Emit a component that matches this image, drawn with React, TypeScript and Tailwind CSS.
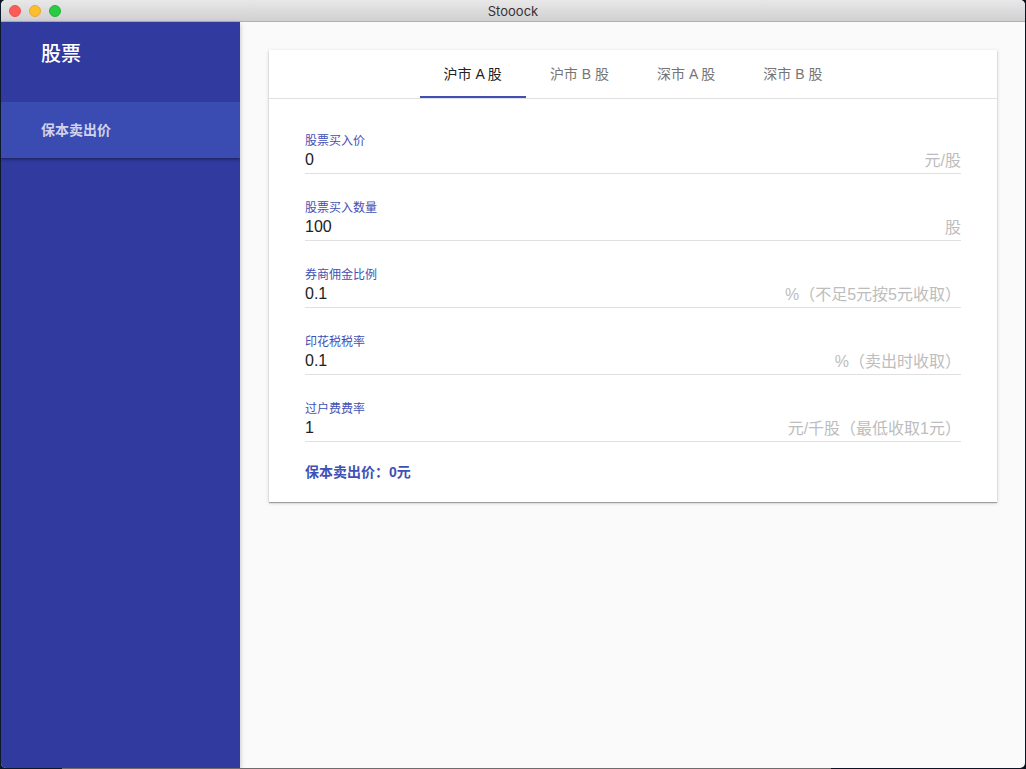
import React, { useState } from "react";
import clsx from "clsx";

const markets = ["沪市 A 股", "沪市 B 股", "深市 A 股", "深市 B 股"];

const fields = [
  { name: "price", label: "股票买入价", unit: "元/股" },
  { name: "amount", label: "股票买入数量", unit: "股" },
  { name: "commission", label: "券商佣金比例", unit: "%（不足5元按5元收取）" },
  { name: "stampTax", label: "印花税税率", unit: "%（卖出时收取）" },
  { name: "transferFee", label: "过户费费率", unit: "元/千股（最低收取1元）" },
];

const defaults: Record<string, string> = {
  price: "0",
  amount: "100",
  commission: "0.1",
  stampTax: "0.1",
  transferFee: "1",
};

function getBreakEven(values: Record<string, string>) {
  const [price, amount, commission, stampTax, transferFee] = fields.map(
    (field) => Number(values[field.name]) || 0
  );
  if (!price || !amount) return 0;

  const transfer = Math.max(1, (amount / 1000) * transferFee);
  const buyFee = Math.max(5, (price * amount * commission) / 100);
  const cost = price * amount + buyFee + transfer * 2;

  // the minimum commission of 5 applies when selling too
  let total = (cost + 5) / (1 - stampTax / 100);
  if ((total * commission) / 100 > 5) {
    total = cost / (1 - stampTax / 100 - commission / 100);
  }
  return Math.ceil((total / amount) * 1000) / 1000;
}

function TitleBar() {
  return (
    <header className="grid h-[22px] grid-cols-3 items-center border-b border-[#b1afb1] bg-linear-to-b from-[#e9e8e9] to-[#d1cfd1] px-2">
      <div className="flex gap-2">
        <button
          aria-label="close"
          className="size-3 rounded-full border border-[#e9544b] bg-[#fc5b57]"
        />
        <button
          aria-label="minimize"
          className="size-3 rounded-full border border-[#e5a935] bg-[#fdbe2e]"
        />
        <button
          aria-label="zoom"
          className="size-3 rounded-full border border-[#24b339] bg-[#28cb41]"
        />
      </div>
      <h1 className="text-center font-[Inter,sans-serif] text-[13px] leading-5 text-[#343234]">
        Stooock
      </h1>
    </header>
  );
}

function Sidebar() {
  return (
    <aside className="relative z-10 w-[239px] shrink-0 bg-[#303a9f] shadow-[0_2px_5px_rgba(0,0,0,0.26)]">
      <h2 className="h-20 px-10 pt-4 text-xl leading-8 font-medium text-white">
        股票
      </h2>
      <nav className="overflow-hidden pb-2">
        <a
          href="#break-even"
          className="flex h-14 items-center bg-[#3a4bb2] px-10 text-sm font-bold text-[#cfd2ea] shadow-[0_1px_3px_rgba(0,0,0,0.5)]"
        >
          保本卖出价
        </a>
      </nav>
    </aside>
  );
}

function Tabs({
  active,
  onChange,
}: {
  active: number;
  onChange: (index: number) => void;
}) {
  return (
    <div
      role="tablist"
      className="flex justify-center border-b border-[#e0e0e0]"
    >
      {markets.map((market, index) => (
        <button
          key={market}
          role="tab"
          aria-selected={active === index}
          onClick={() => onChange(index)}
          className={clsx(
            "h-12 border-b-2 px-6 pt-0.5 text-sm",
            active === index
              ? "border-[#3f51b5] text-[#212121]"
              : "border-transparent text-[#757575]"
          )}
        >
          {market}
        </button>
      ))}
    </div>
  );
}

function App() {
  const [active, setActive] = useState(0);
  const [values, setValues] = useState(defaults);

  return (
    <div
      lang="zh-CN"
      className="flex min-h-screen flex-col bg-linear-[90deg,#0b1a2a_6%,#6f6c6e_6%,#6f6c6e_81%,#0a1424_81%] px-px pb-px font-['Liberation_Sans','Noto_Sans_CJK_SC',sans-serif]"
    >
      <div className="flex grow flex-col overflow-hidden rounded-[5px] bg-[#fafafa]">
        <TitleBar />
        <div className="flex grow">
          <Sidebar />
          <main className="grow py-7 pr-7 pl-[29px]">
            <section className="bg-white shadow-[0_1px_4px_rgba(0,0,0,0.16),0_1px_1px_rgba(0,0,0,0.3)]">
              <Tabs active={active} onChange={setActive} />
              <form className="px-9 pt-2 pb-5">
                {fields.map(({ name, label, unit }) => (
                  <div key={name} className="border-b border-[#e0e0e0] pt-[26px]">
                    <label
                      htmlFor={name}
                      className="block text-xs leading-4 text-[#3f51b5]"
                    >
                      {label}
                    </label>
                    <div className="flex h-6 items-center">
                      <input
                        id={name}
                        value={values[name]}
                        onChange={(e) =>
                          setValues({ ...values, [name]: e.target.value })
                        }
                        className="min-w-0 grow pb-0.5 text-base leading-5 text-[#212121] outline-none"
                      />
                      <span className="text-base leading-5 text-[#bdbdbd]">
                        {unit}
                      </span>
                    </div>
                  </div>
                ))}
                <output className="mt-5 block text-sm leading-5 font-bold text-[#3f51b5]">
                  保本卖出价：{getBreakEven(values)}元
                </output>
              </form>
            </section>
          </main>
        </div>
      </div>
    </div>
  );
}

export default App;
